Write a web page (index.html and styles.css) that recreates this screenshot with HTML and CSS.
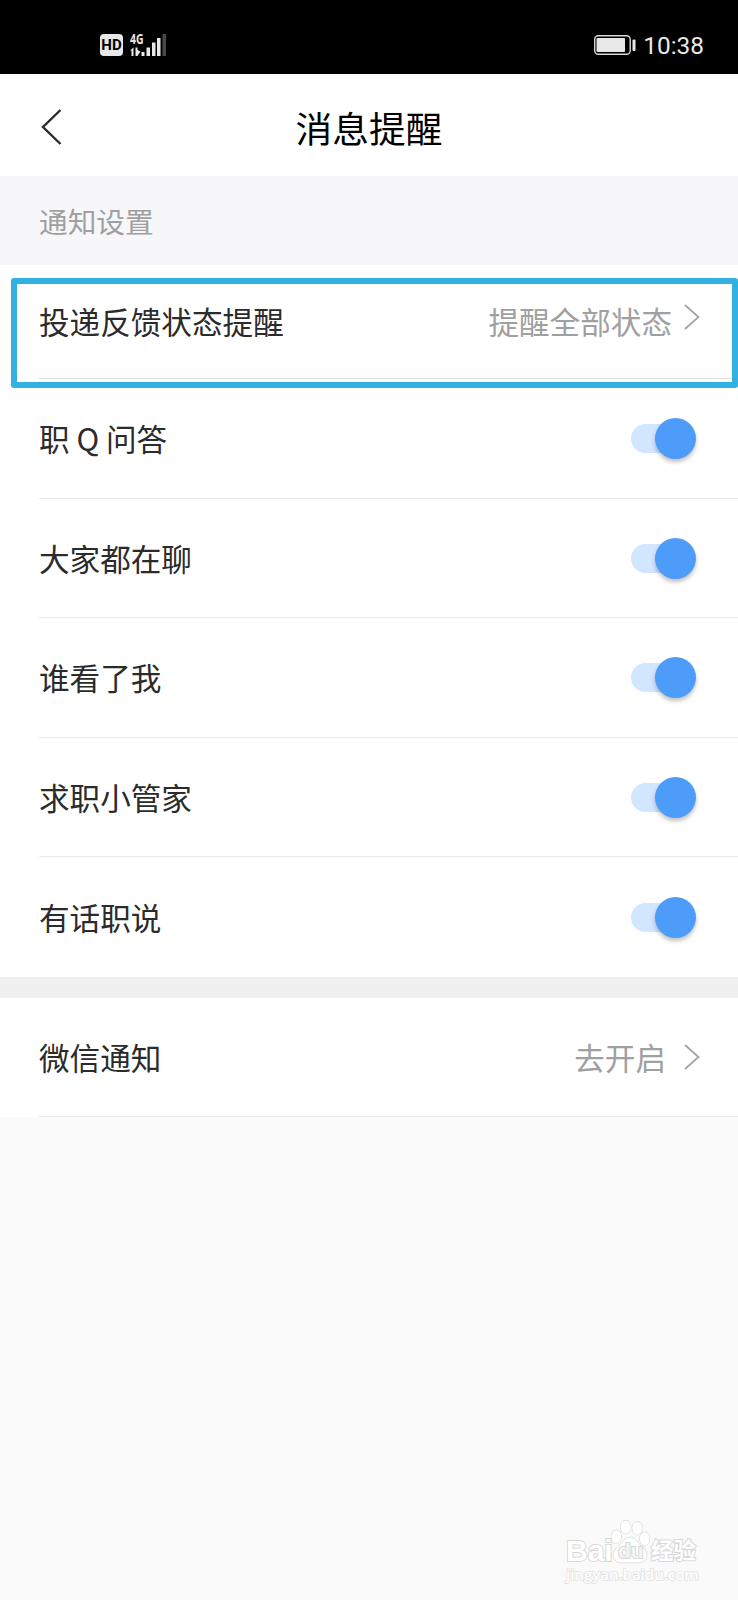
FILE: index.html
```html
<!DOCTYPE html>
<html lang="zh-CN">
<head>
    <meta charset="UTF-8">
    <meta name="viewport" content="width=device-width, initial-scale=1.0">
    <title>消息提醒</title>
    <link rel="stylesheet" href="styles.css">
</head>
<body>

<div class="status-bar">
    <div class="status-left">
        <span class="hd">HD</span>
        <div class="network">
            <span class="network-type">4G</span>
            <svg class="signal" width="38" height="18" viewBox="0 0 38 18">
                <path d="M0 12.500L3.500 9.500V18H1.500V12.500zM5.500 9.500H7.500V12L10.500 13.500L7.500 18H5.500z" fill="#e8e8e8"/>
                <path d="M11.500 14h3v4h-3zM16.500 9.500h3.500V18h-3.500zM22 4.500h3.500V18H22zM27 0h3.500v18H27z" fill="#e8e8e8"/>
                <path d="M32.500 -4h3.500v22h-3.500z" fill="#484848"/>
            </svg>
        </div>
    </div>
    <div class="status-right">
        <svg width="42" height="20" viewBox="0 0 42 20">
            <rect x="0.700" y="0.700" width="35.500" height="18.600" rx="3.500" fill="none" stroke="#d8d8d8" stroke-width="1.400"/>
            <rect x="2.500" y="3" width="28.500" height="14" rx="1" fill="#e8e8e8"/>
            <rect x="38.500" y="4.500" width="3" height="11.500" rx="1" fill="#e8e8e8"/>
        </svg>
        <span class="time">10:38</span>
    </div>
</div>

<div class="header">
    <svg class="back" width="22" height="38" viewBox="0 0 22 38">
        <path d="M19.500 2L2 19L19.500 36" fill="none" stroke="#2b2b2b" stroke-width="2.400"/>
    </svg>
    <h1>消息提醒</h1>
</div>

<div class="section-title">通知设置</div>

<div class="list">
    <div class="row row-first">
        <span>投递反馈状态提醒</span>
        <div class="value">
            <span>提醒全部状态</span>
            <svg class="arrow" width="16" height="28" viewBox="0 0 16 28">
                <path d="M1 2L14.500 14L1 26" fill="none" stroke="#a3a3a3" stroke-width="1.700"/>
            </svg>
        </div>
        <div class="highlight"></div>
    </div>
    <div class="row">
        <span>职 Q 问答</span>
        <div class="switch"></div>
    </div>
    <div class="row">
        <span>大家都在聊</span>
        <div class="switch"></div>
    </div>
    <div class="row">
        <span>谁看了我</span>
        <div class="switch"></div>
    </div>
    <div class="row">
        <span>求职小管家</span>
        <div class="switch"></div>
    </div>
    <div class="row row-last">
        <span>有话职说</span>
        <div class="switch"></div>
    </div>
</div>

<div class="list list-wechat">
    <div class="row">
        <span>微信通知</span>
        <div class="value value-wide">
            <span>去开启</span>
            <svg class="arrow" width="16" height="28" viewBox="0 0 16 28">
                <path d="M1 2L14.500 14L1 26" fill="none" stroke="#a3a3a3" stroke-width="1.700"/>
            </svg>
        </div>
    </div>
</div>

<div class="watermark">
    <div class="watermark-logo">
        <span class="bai">Bai</span>
        <div class="paw">
            <svg width="40" height="44" viewBox="0 0 40 44">
                <g fill="#fff" stroke="#d8d8d8" stroke-width="1.300">
                    <path d="M19 17.500C13 17.500 12 23 7 27C0 32 1 42 10 42.500H28C37 42 38 32 31 27C26 23 25 17.500 19 17.500Z"/>
                    <ellipse cx="5.300" cy="16.700" rx="4.900" ry="6.500"/>
                    <ellipse cx="14.700" cy="7.200" rx="5" ry="6.500"/>
                    <ellipse cx="26.300" cy="8.200" rx="5" ry="6.500"/>
                    <ellipse cx="33.700" cy="18.700" rx="4.900" ry="6.500"/>
                </g>
            </svg>
            <span class="du">du</span>
        </div>
        <span class="jingyan">经验</span>
    </div>
    <div class="watermark-url">jingyan.baidu.com</div>
</div>

</body>
</html>
```

FILE: styles.css
```css
* {
    box-sizing: border-box;
}
body {
    margin: 0;
    min-height: 1600px;
    background-color: #fafafa;
    font-family: "Noto Sans CJK SC", sans-serif;
    color: #2b2b2b;
}
.status-bar {
    display: flex;
    justify-content: space-between;
    height: 74px;
    padding: 0 34px 0 100px;
    background-color: #000;
    color: #e8e8e8;
}
.status-left {
    display: flex;
    gap: 7px;
    padding-top: 34px;
}
.hd {
    width: 23px;
    height: 22px;
    border-radius: 4px;
    background-color: #e8e8e8;
    color: #000;
    font: bold 15px/23px Roboto, sans-serif;
    text-align: center;
}
.network {
    display: flex;
    flex-direction: column;
}
.network-type {
    height: 4px;
    margin-top: -1px;
    font: bold 14.5px/12px "Open Sans", sans-serif;
    transform: scaleX(0.72);
    transform-origin: left;
}
.signal {
    margin-top: 1px;
    overflow: visible;
}
.status-right {
    display: flex;
    align-items: center;
    gap: 7px;
    height: 20px;
    margin-top: 35px;
}
.time {
    font: 24.4px/20px Roboto, sans-serif;
    padding-top: 2px;
}
.header {
    display: grid;
    grid-template-columns: 60px 1fr 60px;
    align-items: center;
    height: 102px;
    padding: 0 41px;
    background-color: #fff;
}
.back {
    margin-top: 4px;
}
.header h1 {
    margin: 4px 0 0;
    color: #000;
    font-size: 36.7px;
    font-weight: 400;
    line-height: 50px;
    text-align: center;
}
.section-title {
    height: 89px;
    padding-left: 39px;
    background-color: #f7f7fa;
    color: #a0a0a0;
    font-size: 28.7px;
    line-height: 89px;
}
.list {
    background-color: #fff;
}
.row {
    position: relative;
    display: flex;
    justify-content: space-between;
    align-items: center;
    height: 119.6px;
    margin-left: 39px;
    padding-right: 38px;
    border-bottom: 1px solid #ebebeb;
    font-size: 30.6px;
    line-height: 44px;
}
.row-first {
    height: 114px;
    padding-bottom: 2px;
    border-bottom-color: #dcdcdc;
}
.row-last {
    border-bottom-color: #fff;
}
.highlight {
    position: absolute;
    top: 13px;
    right: 0;
    left: -28px;
    height: 110px;
    border: 6px solid #30b1e2;
    border-radius: 3px;
}
.value {
    display: flex;
    align-items: center;
    gap: 12px;
    color: #a0a0a0;
}
.value-wide {
    gap: 18px;
}
.row-first .arrow {
    margin-bottom: 7px;
}
.switch {
    position: relative;
    width: 58px;
    height: 29px;
    margin-top: 1px;
    margin-right: 11px;
    border-radius: 15px;
    background-color: #d2e6ff;
}
.switch::after {
    content: "";
    position: absolute;
    top: -6px;
    right: -7px;
    width: 41px;
    height: 41px;
    border-radius: 50%;
    background-color: #4e9cfa;
    box-shadow: 0 3px 4px rgba(0, 0, 0, 0.25);
}
.list-wechat {
    border-top: 21px solid #f0f0f0;
}
.list-wechat .row {
    height: 119px;
}
/* logo in the bottom right corner */
.watermark {
    position: absolute;
    top: 1520px;
    left: 566px;
    width: 134px;
    color: #fff;
    -webkit-text-stroke: 2px #d8d8d8;
    paint-order: stroke fill;
}
.watermark-logo {
    display: flex;
    align-items: flex-end;
    height: 44px;
}
.bai {
    width: 45px;
    font: bold 30px/27px "Liberation Sans", sans-serif;
}
.paw {
    position: relative;
    height: 44px;
}
.du {
    position: absolute;
    top: 19px;
    left: 7px;
    color: #f4f4f4;
    font: bold 21px/24px "Liberation Sans", sans-serif;
}
.jingyan {
    margin-bottom: 3px;
    font-size: 22.5px;
    font-weight: bold;
    line-height: 23px;
}
.watermark-url {
    font: 600 15px/20px "Open Sans", sans-serif;
    -webkit-text-stroke: 1.6px #e2e2e2;
}
```
